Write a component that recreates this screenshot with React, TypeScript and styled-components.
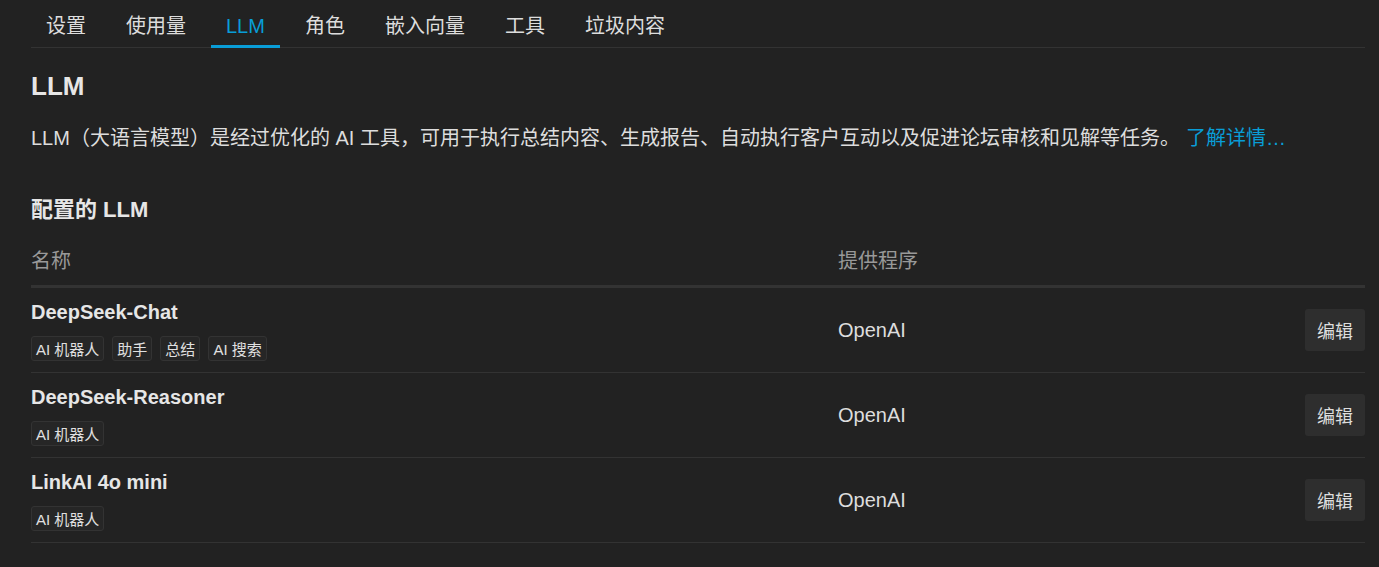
import { Fragment } from 'react';
import styled, { createGlobalStyle } from 'styled-components';

const GlobalStyle = createGlobalStyle`
  body {
    margin: 0;
    background: #222222;
    color: #dddddd;
    font-family: "Liberation Sans", "Noto Sans CJK SC", sans-serif;
  }
`;

interface LlmModel {
  name: string;
  provider: string;
  tags: string[];
}

const models: LlmModel[] = [
  { name: 'DeepSeek-Chat', provider: 'OpenAI', tags: ['AI 机器人', '助手', '总结', 'AI 搜索'] },
  { name: 'DeepSeek-Reasoner', provider: 'OpenAI', tags: ['AI 机器人'] },
  { name: 'LinkAI 4o mini', provider: 'OpenAI', tags: ['AI 机器人'] },
];

const tabs = ['设置', '使用量', 'LLM', '角色', '嵌入向量', '工具', '垃圾内容'];

const Page = styled.div`
  padding: 0 14px 0 31px;
  min-height: 567px;
  box-sizing: border-box;
`;

const TabBar = styled.nav`
  display: flex;
  gap: 10px;
  height: 48px;
  border-bottom: 1px solid #333333;
  box-sizing: border-box;
`;

const Tab = styled.a<{ $active?: boolean }>`
  display: flex;
  align-items: center;
  padding: 6px 15px 0;
  font-size: 20px;
  line-height: 24px;
  color: ${p => (p.$active ? '#099dd7' : '#dddddd')};
  border-bottom: 3px solid ${p => (p.$active ? '#099dd7' : 'transparent')};
  margin-bottom: -1px;
  cursor: pointer;
`;

const Title = styled.h2`
  margin: 20px 0 0;
  font-size: 26px;
  line-height: 36px;
  font-weight: bold;
  color: #e6e6e6;
`;

const Description = styled.p`
  margin: 19px 0 0;
  font-size: 20px;
  line-height: 30px;
  color: #dddddd;
`;

const Link = styled.a`
  color: #099dd7;
  margin-left: 6px;
  cursor: pointer;
`;

const SectionTitle = styled.h3`
  margin: 42px 0 0;
  font-size: 22px;
  line-height: 30px;
  font-weight: bold;
  color: #e6e6e6;
`;

const Table = styled.div`
  margin-top: 12px;
  display: grid;
  grid-template-columns: 807px 1fr auto;
`;

const HeadCell = styled.div`
  padding: 12px 0;
  font-size: 20px;
  line-height: 24px;
  color: #999999;
  border-bottom: 3px solid #333333;
`;

const Cell = styled.div`
  display: flex;
  flex-direction: column;
  justify-content: center;
  height: 84px;
  border-bottom: 1px solid #333333;
`;

const NameCell = styled(Cell)`
  justify-content: flex-start;
  padding-top: 12px;
  box-sizing: content-box;
  height: 72px;
`;

const ModelName = styled.div`
  font-size: 20px;
  line-height: 24px;
  font-weight: bold;
  color: #e6e6e6;
`;

const TagList = styled.div`
  display: flex;
  gap: 8px;
  margin-top: 12px;
`;

const Tag = styled.span`
  display: inline-flex;
  align-items: center;
  height: 25px;
  box-sizing: border-box;
  padding: 0 4px;
  font-size: 15px;
  color: #e0e0e0;
  background: #262626;
  border: 1px solid #333333;
  border-radius: 3px;
`;

const Provider = styled.div`
  font-size: 20px;
  line-height: 24px;
  color: #dddddd;
`;

const ActionCell = styled(Cell)`
  align-items: flex-end;
`;

const EditButton = styled.button`
  height: 42px;
  padding: 0 12px;
  border: none;
  border-radius: 3px;
  background: #2e2e2e;
  color: #dddddd;
  font-family: inherit;
  font-size: 18px;
  cursor: pointer;
`;

export default function App() {
  return (
    <Page>
      <GlobalStyle />
      <TabBar>
        {tabs.map(t => (
          <Tab key={t} $active={t === 'LLM'}>{t}</Tab>
        ))}
      </TabBar>
      <Title>LLM</Title>
      <Description>
        LLM（大语言模型）是经过优化的 AI 工具，可用于执行总结内容、生成报告、自动执行客户互动以及促进论坛审核和见解等任务。
        <Link>了解详情…</Link>
      </Description>
      <SectionTitle>配置的 LLM</SectionTitle>
      <Table>
        <HeadCell>名称</HeadCell>
        <HeadCell>提供程序</HeadCell>
        <HeadCell />
        {models.map(m => (
          <Fragment key={m.name}>
            <NameCell>
              <ModelName>{m.name}</ModelName>
              <TagList>
                {m.tags.map(tag => (
                  <Tag key={tag}>{tag}</Tag>
                ))}
              </TagList>
            </NameCell>
            <Cell>
              <Provider>{m.provider}</Provider>
            </Cell>
            <ActionCell>
              <EditButton>编辑</EditButton>
            </ActionCell>
          </Fragment>
        ))}
      </Table>
    </Page>
  );
}
